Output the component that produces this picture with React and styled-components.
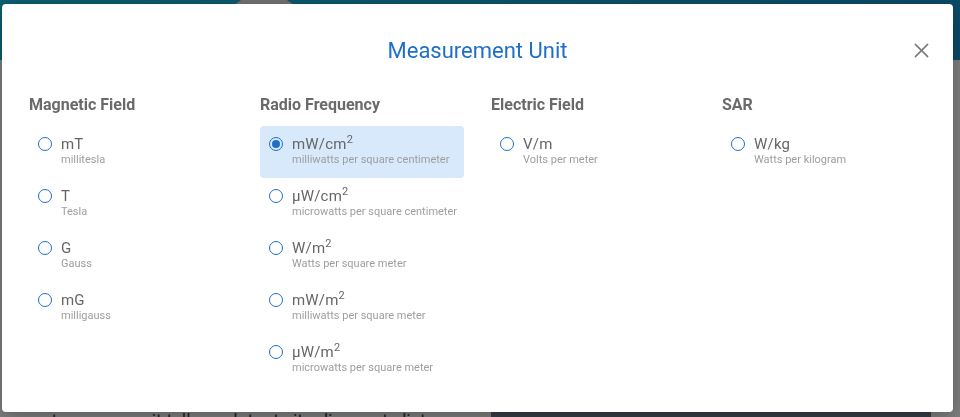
import styled, { createGlobalStyle } from "styled-components";
import { useState } from "react";

const Global = createGlobalStyle`
  html, body {
    margin: 0;
    padding: 0;
    width: 960px;
    height: 417px;
    overflow: hidden;
    font-family: Roboto, "Liberation Sans", Arial, sans-serif;
  }
  * { box-sizing: border-box; }
`;

const Page = styled.div`
  width: 960px;
  height: 417px;
  background: #fff;
  display: flex;
  flex-direction: column;
`;

const Header = styled.div`
  height: 60px;
  background: linear-gradient(90deg, #17bde6, #1496d0);
  display: flex;
  justify-content: flex-start;
  padding-left: 218px;
`;

const Avatar = styled.div`
  width: 92px;
  height: 92px;
  margin-top: -6px;
  border-radius: 50%;
  background: #e8e8e8;
`;

const Content = styled.div`
  flex: 1;
  display: flex;
  align-items: flex-end;
  padding: 0 29px 0 13px;
`;

const Copy = styled.p`
  flex: 1;
  margin: 0 0 -16px;
  font-size: 18px;
  color: #444;
  line-height: 24px;
  white-space: nowrap;
  overflow: hidden;
`;

const Photo = styled.div`
  width: 440px;
  height: 120px;
  margin-bottom: -100px;
  background: #6f7c8e;
`;

const Overlay = styled.div`
  position: fixed;
  inset: 0;
  background: rgba(0, 0, 0, 0.5);
  padding: 4px 7px 5px 2px;
  display: flex;
`;

const Dialog = styled.div`
  flex: 1;
  background: #fff;
  border-radius: 4px;
  padding: 0 27px;
  display: flex;
  flex-direction: column;
  box-shadow: 0 4px 20px rgba(0, 0, 0, 0.3);
`;

const DialogHead = styled.div`
  height: 91px;
  display: flex;
  align-items: center;
  justify-content: center;
  position: relative;
  padding-top: 2px;
`;

const Title = styled.h2`
  margin: 0;
  font-size: 22px;
  font-weight: 400;
  color: #1f6fc6;
`;

const Close = styled.button`
  position: absolute;
  right: -9px;
  top: 32px;
  width: 28px;
  height: 28px;
  border: none;
  background: none;
  padding: 0;
  display: flex;
  align-items: center;
  justify-content: center;
  color: #7a7a7a;
  cursor: pointer;
`;

const Columns = styled.div`
  display: grid;
  grid-template-columns: repeat(4, 204px);
  column-gap: 27px;
`;

const Column = styled.div`
  display: flex;
  flex-direction: column;
`;

const Heading = styled.h3`
  margin: 0 0 11px;
  font-size: 16px;
  font-weight: 700;
  color: #6a6a6a;
  line-height: 20px;
`;

const Item = styled.label`
  height: 52px;
  padding: 9px 9px 0;
  border-radius: 4px;
  display: flex;
  gap: 9px;
  cursor: pointer;
  background: ${(p) => (p.$active ? "#d8e9fc" : "transparent")};
`;

const Radio = styled.span`
  width: 14px;
  height: 14px;
  margin-top: 2px;
  flex: none;
  border-radius: 50%;
  border: 1.5px solid #1f6fc6;
  display: flex;
  align-items: center;
  justify-content: center;
  &::after {
    content: "";
    width: 8px;
    height: 8px;
    border-radius: 50%;
    background: #1f6fc6;
    display: ${(p) => (p.$checked ? "block" : "none")};
  }
`;

const Text = styled.div`
  display: flex;
  flex-direction: column;
  white-space: nowrap;
`;

const Unit = styled.span`
  font-size: 15px;
  line-height: 18px;
  color: #666;
  letter-spacing: 0.2px;
  sup {
    font-size: 11px;
    line-height: 0;
    vertical-align: 6px;
  }
`;

const Desc = styled.span`
  font-size: 11px;
  line-height: 14px;
  color: #9e9e9e;
`;

const groups = [
  {
    title: "Magnetic Field",
    units: [
      ["mT", "", "millitesla"],
      ["T", "", "Tesla"],
      ["G", "", "Gauss"],
      ["mG", "", "milligauss"],
    ],
  },
  {
    title: "Radio Frequency",
    units: [
      ["mW/cm", "2", "milliwatts per square centimeter"],
      ["µW/cm", "2", "microwatts per square centimeter"],
      ["W/m", "2", "Watts per square meter"],
      ["mW/m", "2", "milliwatts per square meter"],
      ["µW/m", "2", "microwatts per square meter"],
    ],
  },
  {
    title: "Electric Field",
    units: [["V/m", "", "Volts per meter"]],
  },
  {
    title: "SAR",
    units: [["W/kg", "", "Watts per kilogram"]],
  },
];

const App = () => {
  const [selected, setSelected] = useState("mW/cm2");
  return (
    <>
      <Global />
      <Page>
        <Header>
          <Avatar />
        </Header>
        <Content>
          <Copy>egestas nunc a, sit tellus volutpat sit odio amet, dictum</Copy>
          <Photo />
        </Content>
      </Page>
      <Overlay>
        <Dialog>
          <DialogHead>
            <Title>Measurement Unit</Title>
            <Close aria-label="Close">
              <svg width="15" height="15" viewBox="0 0 16 16">
                <path d="M1.5 1.5 L14.5 14.5 M14.5 1.5 L1.5 14.5" stroke="currentColor" strokeWidth="1.7" strokeLinecap="round" />
              </svg>
            </Close>
          </DialogHead>
          <Columns>
            {groups.map((g) => (
              <Column key={g.title}>
                <Heading>{g.title}</Heading>
                {g.units.map(([u, sup, d]) => {
                  const id = u + sup;
                  const on = id === selected;
                  return (
                    <Item key={id} $active={on} onClick={() => setSelected(id)}>
                      <Radio $checked={on} />
                      <Text>
                        <Unit>
                          {u}
                          {sup && <sup>{sup}</sup>}
                        </Unit>
                        <Desc>{d}</Desc>
                      </Text>
                    </Item>
                  );
                })}
              </Column>
            ))}
          </Columns>
        </Dialog>
      </Overlay>
    </>
  );
};

export default App;
